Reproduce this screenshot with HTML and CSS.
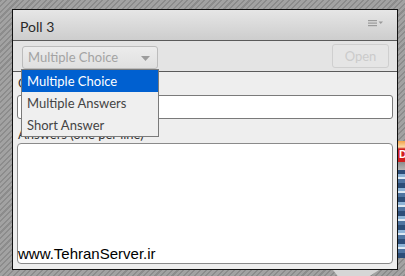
FILE: index.html
```html
<!DOCTYPE html>
<html lang="en">
<head>
    <meta charset="UTF-8">
    <title>Poll 3</title>
    <link rel="stylesheet" href="styles.css">
</head>
<body>
    <div class="desk">
        <div class="panel">
            <div class="panel-head">
                <span class="title">Poll 3</span>
                <svg class="menu-icon" width="16" height="8" viewBox="0 0 16 8">
                    <rect x="0" y="0" width="9" height="1.2" fill="#9a9a9a"/>
                    <rect x="0" y="2.5" width="9" height="1.2" fill="#9a9a9a"/>
                    <rect x="0" y="5" width="9" height="1.2" fill="#9a9a9a"/>
                    <polygon points="10.5,1.5 15,1.5 12.75,4" fill="#9a9a9a"/>
                </svg>
            </div>
            <div class="toolbar">
                <div class="select">
                    <span>Multiple Choice</span>
                    <svg width="9" height="5" viewBox="0 0 9 5"><polygon points="0,0 9,0 4.5,5" fill="#9c9c9c"/></svg>
                </div>
                <button class="open-btn">Open</button>
                <ul class="dropdown">
                    <li class="selected">Multiple Choice</li>
                    <li>Multiple Answers</li>
                    <li>Short Answer</li>
                </ul>
            </div>
            <div class="panel-body">
                <label class="field-label">Question</label>
                <div class="input"></div>
                <label class="field-label answers">Answers (one per line)</label>
                <div class="textarea">
                    <span class="watermark">www.TehranServer.ir</span>
                </div>
            </div>
        </div>
        <div class="side-window"><span>D</span></div>
        <div class="shadow-tab"></div>
    </div>
</body>
</html>
```
FILE: styles.css
```css
body {
    margin: 0;
    width: 405px;
    height: 276px;
    overflow: hidden;
    font-family: Lato, "Open Sans", sans-serif;
    background: repeating-linear-gradient(135deg, #8c8c8c 0px, #8c8c8c 1.5px, #a2a2a2 1.5px, #a2a2a2 4px);
}

.desk {
    position: relative;
    height: 276px;
    padding-top: 9px;
    box-sizing: border-box;
}

.panel {
    margin-left: 12px;
    width: 386px;
    height: 261px;
    box-sizing: border-box;
    border: 1px solid #111;
    background: #eeeeee;
    display: flex;
    flex-direction: column;
}

.panel-head {
    height: 30px;
    border-bottom: 1px solid #5a5a5a;
    background: linear-gradient(#e6e6e6, #cdcdcd);
    display: flex;
    align-items: center;
    justify-content: space-between;
    padding: 0 13px 0 7px;
}

.title {
    font-size: 14px;
    color: #2a2a2a;
    margin-top: 2px;
}

.menu-icon {
    margin-top: -3px;
}

.toolbar {
    position: relative;
    height: 30px;
    border-bottom: 1px solid #5a5a5a;
    background: #e4e4e4;
    display: flex;
    align-items: center;
    justify-content: space-between;
    padding: 0 8px 0 9px;
}

.select {
    width: 136px;
    height: 23px;
    box-sizing: border-box;
    margin-top: 2px;
    border: 1px solid #bcbcbc;
    border-radius: 3px;
    background: linear-gradient(#ececec, #e0e0e0);
    display: flex;
    align-items: center;
    justify-content: space-between;
    padding: 0 7px 0 5px;
    font-size: 13px;
    color: #a3a3a3;
}

.select svg {
    margin-top: 2px;
}

.open-btn {
    width: 57px;
    height: 24px;
    box-sizing: border-box;
    border: 1px solid #cfcfcf;
    border-radius: 3px;
    background: #e5e5e5;
    font-family: Lato, "Open Sans", sans-serif;
    font-size: 13px;
    color: #cbcbcb;
    padding: 0;
}

.dropdown {
    position: absolute;
    left: 8px;
    top: 28px;
    width: 136px;
    margin: 0;
    padding: 0;
    list-style: none;
    border: 1px solid #7a7a7a;
    background: #efefef;
    z-index: 2;
}

.dropdown li {
    height: 22px;
    line-height: 22px;
    padding-left: 5px;
    font-size: 13px;
    color: #444;
}

.dropdown li.selected {
    background: #0060d0;
    color: #fff;
}

.panel-body {
    flex: 1;
    padding: 2px 4px 5px 4px;
    display: flex;
    flex-direction: column;
}

.field-label {
    display: block;
    font-size: 13px;
    line-height: 18px;
    color: #333;
    padding-left: 1px;
    margin-bottom: 3px;
}

.field-label.answers {
    margin-top: 6px;
    margin-bottom: 0;
}

.input {
    height: 24px;
    box-sizing: border-box;
    border: 1px solid #7a7a7a;
    border-radius: 3px;
    background: #fff;
}

.textarea {
    position: relative;
    flex: 1;
    border: 1px solid #8a8a8a;
    border-radius: 4px;
    background: #fff;
}

.watermark {
    position: absolute;
    left: 0;
    bottom: 1px;
    font-family: "Liberation Sans", Arial, sans-serif;
    font-size: 15px;
    color: #000;
}

.side-window {
    position: absolute;
    left: 398px;
    top: 141px;
    width: 12px;
    height: 117px;
    background:
        linear-gradient(#f2a24a 0px, #fbd9a8 6px, #d02020 8px, #d02020 21px, #8d8d8d 21px, #b5b5b5 29px, transparent 29px),
        repeating-linear-gradient(#2c4d78 0px, #2c4d78 5px, #8fb4d6 5px, #8fb4d6 8px, #dbe8f3 8px, #dbe8f3 10px, #4f74a0 10px, #4f74a0 14px);
}

.side-window span {
    position: absolute;
    left: 1px;
    top: 7px;
    font-family: "Liberation Sans", sans-serif;
    font-weight: bold;
    font-size: 11px;
    color: #fff;
}

.shadow-tab {
    position: absolute;
    left: 333px;
    top: 270px;
    width: 46px;
    height: 6px;
    background: #d6d6d6;
    clip-path: polygon(0 0, 100% 0, 80% 100%, 10% 100%);
}
```
